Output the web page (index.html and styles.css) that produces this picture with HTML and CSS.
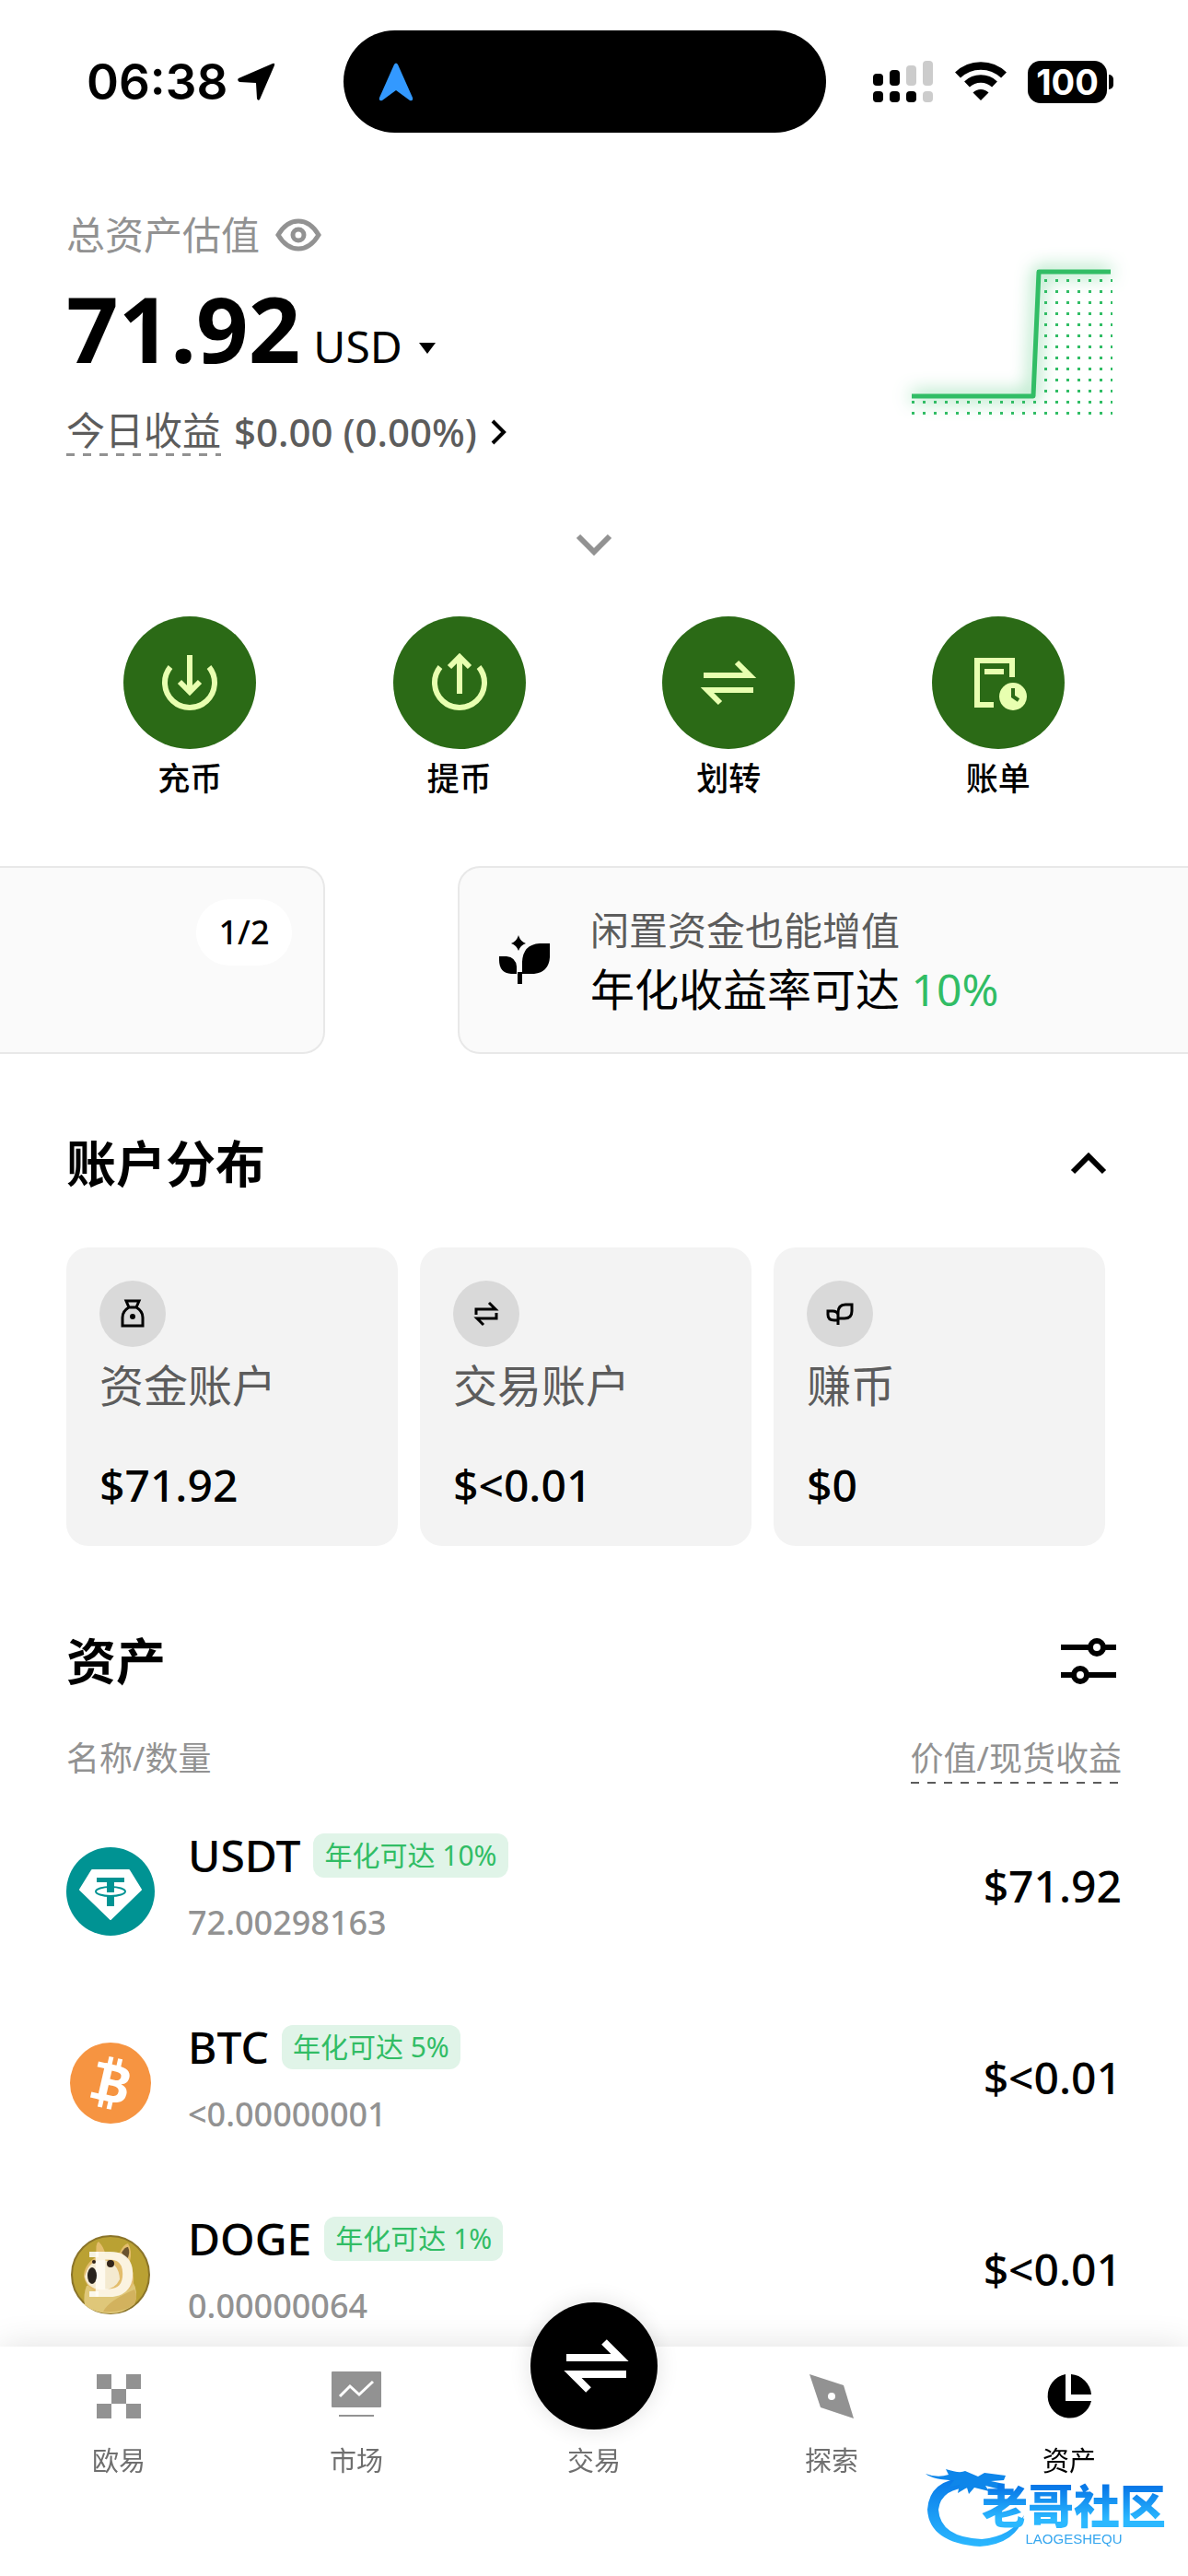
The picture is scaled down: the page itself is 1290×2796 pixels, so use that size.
FILE: index.html
```html
<!DOCTYPE html>
<html lang="zh-CN">
<head>
    <meta charset="UTF-8">
    <meta name="viewport" content="width=device-width, initial-scale=1.0">
    <title>资产</title>
    <link rel="stylesheet" href="styles.css">
</head>
<body>
    <div class="status-bar">
        <div class="status-left">
            <span class="clock">06:38</span>
            <svg width="42" height="42" viewBox="0 0 42 42"><path d="M39 1Q42 0 41 3L25 40Q23 42 22 39L21 22L3 21Q0 19 2 17Z" fill="#000"/></svg>
        </div>
        <div class="island">
            <svg width="38" height="42" viewBox="0 0 38 42"><path d="M17 2Q19-1 21 2L37 38Q38 42 34 41L19 30L4 41Q0 42 1 38Z" fill="#3399ff"/></svg>
        </div>
        <div class="status-right">
            <svg width="66" height="46" viewBox="0 0 66 46">
                <g fill="#000"><rect x="0" y="14" width="11" height="13" rx="4"/><rect x="18" y="10" width="11" height="17" rx="4"/><rect x="0" y="33" width="11" height="12" rx="4"/><rect x="18" y="33" width="11" height="12" rx="4"/><rect x="36" y="33" width="11" height="12" rx="4"/></g>
                <g fill="#ccc"><rect x="36" y="5" width="11" height="22" rx="4"/><rect x="54" y="0" width="11" height="27" rx="4"/><rect x="54" y="33" width="11" height="12" rx="4"/></g>
            </svg>
            <svg width="58" height="43" viewBox="0 0 58 43">
                <path d="M4 14.500A36 36 0 0 1 54 14.500M14 24.500A22 22 0 0 1 44 24.500" fill="none" stroke="#000" stroke-width="8.500"/>
                <path d="M29 42L20.500 33.500A12 12 0 0 1 37.500 33.500Z" fill="#000"/>
            </svg>
            <span class="battery">100</span>
        </div>
    </div>

    <main>
        <section class="summary">
            <div>
                <div class="summary-label">总资产估值
                    <button class="icon-btn" aria-label="隐藏资产">
                        <svg width="50" height="36" viewBox="0 0 50 36" fill="none" stroke="#929292" stroke-width="5"><path d="M3 18Q12 3 25 3T47 18Q38 33 25 33T3 18Z"/><circle cx="25" cy="18" r="6"/></svg>
                    </button>
                </div>
                <div class="balance"><strong>71.92</strong><button class="currency">USD<svg width="18" height="12" viewBox="0 0 18 12"><path d="M0 0H18L9 12Z"/></svg></button></div>
                <a class="profit" href="#profit">
                    <span class="dashed">今日收益</span>
                    <b>$0.00 (0.00%)</b>
                    <svg width="18" height="28" viewBox="0 0 18 28"><path d="M3 2L15 14L3 26" fill="none" stroke="#000" stroke-width="4"/></svg>
                </a>
            </div>
            <svg class="trend" width="220" height="170" viewBox="0 0 220 170">
                <defs><pattern id="dots" width="12" height="12" patternUnits="userSpaceOnUse"><rect width="3" height="3" fill="#31bd65"/></pattern></defs>
                <g transform="translate(0 3)">
                    <path d="M0 144H144V12H218V159H0Z" fill="url(#dots)"/>
                </g>
                <path class="trend-line" d="M0 142H132L138 7H216"/>
            </svg>
        </section>

        <button class="expand icon-btn" aria-label="展开">
            <svg width="40" height="24" viewBox="0 0 40 24"><path d="M3 3L20 20L37 3" fill="none" stroke="#929292" stroke-width="6"/></svg>
        </button>

        <nav class="actions">
            <a href="#deposit">
                <span class="action-icon"><svg viewBox="0 0 144 144"><path d="M51 55A27 27 0 1 0 93 55M72 42V82M61 71L72 82L83 71"/></svg></span>
                充币
            </a>
            <a href="#withdraw">
                <span class="action-icon"><svg viewBox="0 0 144 144"><path d="M51 55A27 27 0 1 0 93 55M72 84V45M61 55L72 44L83 55"/></svg></span>
                提币
            </a>
            <a href="#transfer">
                <span class="action-icon"><svg viewBox="0 0 144 144"><path d="M45 64H95L81 50M99 80H49L63 94"/></svg></span>
                划转
            </a>
            <a href="#bills">
                <span class="action-icon"><svg viewBox="0 0 144 144"><path d="M67 96H49V48H87V66M57 60H78"/><circle cx="88" cy="87" r="15"/><path class="hand" d="M88 78V87L94 91"/></svg></span>
                账单
            </a>
        </nav>
    </main>

    <section class="banners">
        <div class="banner banner-prev"><span class="pager">1/2</span></div>
        <a class="banner banner-next" href="#earn">
            <svg width="58" height="54" viewBox="0 0 58 54"><path d="M22 0Q24 7 30 9Q24 11 22 17Q20 11 14 9Q20 7 22 0ZM1 23H9Q19 24 20 34V42H14Q1 41 1 27ZM56 9V24Q55 40 39 42H26V29Q27 10 45 9Z"/><path d="M21 40H26V53H21Z"/></svg>
            <span class="banner-text"><small>闲置资金也能增值</small>年化收益率可达 <em>10%</em></span>
        </a>
    </section>

    <main>
        <div class="section-head">
            <h2>账户分布</h2>
            <button class="icon-btn collapse" aria-label="收起"><svg width="40" height="26" viewBox="0 0 40 26"><path d="M3 22L20 5L37 22" fill="none" stroke="#000" stroke-width="6"/></svg></button>
        </div>
        <div class="accounts">
            <a class="account" href="#funding">
                <span class="account-icon"><svg viewBox="0 0 72 72"><path d="M29 22H43L40 29H32ZM32 29Q25 33 25 40V49H47V40Q47 33 40 29"/><circle cx="36" cy="39" r="3" fill="#000" stroke="none"/></svg></span>
                <span class="account-name">资金账户</span>
                <b>$71.92</b>
            </a>
            <a class="account" href="#trading">
                <span class="account-icon"><svg viewBox="0 0 72 72"><path d="M25 37V31H46L39 24M47 35V41H26L33 48"/></svg></span>
                <span class="account-name">交易账户</span>
                <b>$&lt;0.01</b>
            </a>
            <a class="account" href="#earning">
                <span class="account-icon"><svg viewBox="0 0 72 72"><path d="M34 41V35Q34 26 42 26H49V33Q49 41 41 41H34V48M34 43H30Q23 43 23 37V33H28Q33 33 34 37"/></svg></span>
                <span class="account-name">赚币</span>
                <b>$0</b>
            </a>
        </div>

        <div class="section-head assets-head">
            <h2>资产</h2>
            <button class="icon-btn filter" aria-label="筛选"><svg width="60" height="54" viewBox="0 0 60 54" fill="none" stroke="#000" stroke-width="6"><path d="M0 12H31M47 12H60M0 42H13M29 42H60"/><circle cx="39" cy="12" r="7"/><circle cx="21" cy="42" r="7"/></svg></button>
        </div>
        <table class="assets">
            <thead>
                <tr><th>名称/数量</th><th><span class="dashed">价值/现货收益</span></th></tr>
            </thead>
            <tbody>
                <tr>
                    <td>
                        <div class="coin">
                            <svg class="coin-logo" viewBox="0 0 96 96">
                                <circle cx="48" cy="48" r="48" fill="#009393"/>
                                <path d="M28 25H68L81 46L48 78L15 46Z" fill="#fff" stroke="#fff" stroke-width="2" stroke-linejoin="round"/>
                                <path d="M33 33H63V38H52V49H44V38H33ZM44 53H52V64H44Z" fill="#009393"/>
                                <ellipse cx="48" cy="48" rx="16" ry="5" fill="none" stroke="#009393" stroke-width="2"/>
                            </svg>
                            <div>
                                <div class="coin-name">USDT <span class="tag">年化可达 10%</span></div>
                                <div class="amount">72.00298163</div>
                            </div>
                        </div>
                    </td>
                    <td>$71.92</td>
                </tr>
                <tr>
                    <td>
                        <div class="coin">
                            <svg class="coin-logo" viewBox="0 0 96 96">
                                <circle cx="48" cy="48" r="44" fill="#f69441"/>
                                <g transform="rotate(13 48 48)" fill="#fff">
                                    <path d="M40 20H45V30H40ZM50 20H55V30H50ZM40 66H45V76H40ZM50 66H55V76H50ZM30 28H40V34H30ZM30 62H40V68H30Z"/>
                                    <text class="btc-mark" x="33" y="68">B</text>
                                </g>
                            </svg>
                            <div>
                                <div class="coin-name">BTC <span class="tag">年化可达 5%</span></div>
                                <div class="amount">&lt;0.00000001</div>
                            </div>
                        </div>
                    </td>
                    <td>$&lt;0.01</td>
                </tr>
                <tr>
                    <td>
                        <div class="coin">
                            <svg class="coin-logo" viewBox="0 0 96 96">
                                <circle cx="48" cy="48" r="42" fill="#baa133" stroke="#8a742a" stroke-width="2"/>
                                <path d="M20 81Q18 70 22 60L72 55Q79 67 74 80Q62 90 48 90Q31 90 20 81Z" fill="#dfc779"/>
                                <path d="M40 88Q46 76 74 64Q78 72 74 80Q60 90 40 88Z" fill="#d2b25e"/>
                                <path d="M33 28Q31 14 35 12Q41 18 42 25L58 24Q62 15 67 14Q72 22 69 34Q74 46 73 58Q66 70 48 70Q24 70 19 50Q19 37 33 28Z" fill="#e3bd6c"/>
                                <path d="M60 24Q64 17 67 18Q70 24 66 31Z" fill="#6b532f"/>
                                <path d="M22 44Q27 32 40 32Q57 34 58 53Q52 66 36 64Q22 62 20 50Z" fill="#f4ead0"/>
                                <path d="M25 23H35V29H25ZM25 66H35V72H25Z" fill="#fff" fill-opacity=".85"/>
                                <text class="doge-mark" x="26" y="72">D</text>
                                <ellipse cx="28" cy="49" rx="5" ry="9" fill="#29231d"/>
                                <circle cx="48" cy="36" r="4" fill="#332519"/><circle cx="30" cy="34" r="2" fill="#332519"/>
                            </svg>
                            <div>
                                <div class="coin-name">DOGE <span class="tag">年化可达 1%</span></div>
                                <div class="amount">0.00000064</div>
                            </div>
                        </div>
                    </td>
                    <td>$&lt;0.01</td>
                </tr>
            </tbody>
        </table>
    </main>

    <nav class="tab-bar">
        <a href="#home">
            <svg width="54" height="54" viewBox="0 0 54 54" fill="#929292"><path d="M3 3h16v16H3zM35 3h16v16H35zM19 19h16v16H19zM3 35h16v16H3zM35 35h16v16H35z"/></svg>
            欧易
        </a>
        <a href="#market">
            <svg width="54" height="54" viewBox="0 0 54 54"><rect width="54" height="39" rx="1" fill="#929292"/><path d="M9 27L20 16L30 25L45 11" fill="none" stroke="#fff" stroke-width="3"/><path d="M8 48H46" stroke="#929292" stroke-width="2"/></svg>
            市场
        </a>
        <a class="trade" href="#trade">
            <span class="trade-btn"><svg viewBox="0 0 138 138"><path d="M39 60H97L80 43M104 78H46L63 95" fill="none" stroke="#fff" stroke-width="8"/></svg></span>
            交易
        </a>
        <a href="#explore">
            <svg width="54" height="54" viewBox="0 0 54 54"><path d="M3 3L40 15L51 51L15 39Z" fill="#929292"/><circle cx="27" cy="27" r="4" fill="#fff"/></svg>
            探索
        </a>
        <a class="active" href="#assets">
            <svg width="54" height="54" viewBox="0 0 54 54"><path d="M23 3A24 24 0 1 0 51 32H23ZM29 3A24 24 0 0 1 51 25H29Z"/></svg>
            资产
        </a>
    </nav>

    <div class="watermark">
        <svg width="112" height="94" viewBox="0 0 112 94">
            <defs><linearGradient id="blue" x1="0" y1="0" x2="0" y2="1"><stop offset="0" stop-color="#0878e8"/><stop offset="1" stop-color="#2bb8ff"/></linearGradient></defs>
            <path d="M46 17Q5 19 3 52Q5 88 60 92Q100 89 108 58Q94 81 62 84Q17 82 15 52Q18 27 54 28Z" fill="url(#blue)"/>
            <path d="M1 13Q14 18 26 14L23 8Q38 13 44 10L58 16L65 12L88 15L86 20L72 21L86 24L82 30L66 26L70 32L54 28L48 35L46 28L36 34L38 25L26 28L32 20Q10 20 1 13Z" fill="#0e86ea"/>
        </svg>
        <div>
            <strong>老哥社区</strong>
            <span>LAOGESHEQU</span>
        </div>
    </div>
</body>
</html>
```

FILE: styles.css
```css
* {
    box-sizing: border-box;
}
body {
    margin: 0;
    padding-bottom: 229px;
    background: #fff;
    color: #000;
    font-family: "Noto Sans", "Noto Sans CJK SC", sans-serif;
    overflow-x: hidden;
}
main {
    padding: 0 72px;
}
a {
    color: inherit;
    text-decoration: none;
}
button {
    font: inherit;
    color: inherit;
    background: none;
    border: none;
    padding: 0;
    cursor: pointer;
}
svg {
    display: block;
    flex: none;
}
h2 {
    margin: 0;
    font-size: 54px;
    line-height: 72px;
    font-weight: 600;
}
.icon-btn {
    display: block;
}

/* status bar */
.status-bar {
    display: grid;
    grid-template-columns: 37fr 52fr 39fr;
    align-items: center;
    padding-top: 33px;
    font-family: Inter, sans-serif;
}
.status-left {
    display: flex;
    align-items: center;
    gap: 10px;
    padding-left: 94px;
}
.clock {
    font-size: 53px;
    line-height: 60px;
    font-weight: 600;
}
.island {
    display: flex;
    align-items: center;
    height: 111px;
    padding-left: 38px;
    border-radius: 56px;
    background: #000;
}
.status-right {
    display: flex;
    align-items: center;
    justify-content: flex-end;
    gap: 22px;
    padding-right: 88px;
}
.battery {
    position: relative;
    width: 86px;
    border-radius: 14px;
    background: #000;
    color: #fff;
    font-size: 38px;
    line-height: 46px;
    font-weight: 700;
    text-align: center;
}
.battery::after {
    content: "";
    position: absolute;
    right: -7px;
    top: 15px;
    width: 5px;
    height: 16px;
    border-radius: 0 5px 5px 0;
    background: #000;
}

/* total value */
.summary {
    display: flex;
    justify-content: space-between;
    padding-top: 81px;
}
.summary-label {
    display: flex;
    align-items: center;
    gap: 17px;
    font-size: 42px;
    line-height: 60px;
    color: #929292;
}
.balance {
    display: flex;
    align-items: baseline;
    gap: 14px;
    height: 120px;
    margin-top: 11px;
    font-size: 48px;
    white-space: nowrap;
}
.balance strong {
    font-size: 99px;
    line-height: 120px;
    font-weight: 700;
}
.currency svg {
    display: inline-block;
    margin-left: 18px;
    vertical-align: 10px;
}
.profit {
    display: flex;
    align-items: center;
    gap: 14px;
    margin-top: 26px;
    font-size: 42px;
    line-height: 50px;
    color: #5c5c5c;
}
.profit b {
    font-weight: 500;
}
.dashed {
    padding-bottom: 3px;
    background: repeating-linear-gradient(90deg, #929292 0 9px, transparent 9px 18px) bottom / 100% 3px no-repeat;
}
.trend {
    margin: 63px 8px 0 0;
    overflow: visible;
}
.trend-line {
    fill: none;
    stroke: #31bd65;
    stroke-width: 5;
    stroke-linejoin: round;
    filter: drop-shadow(0 0 10px #31bd65);
}
.expand {
    margin: 84px auto 0;
}

/* round actions */
.actions {
    display: grid;
    grid-template-columns: repeat(4, 1fr);
    margin: 66px -12px 0;
}
.actions a {
    display: flex;
    flex-direction: column;
    align-items: center;
    gap: 8px;
    font-size: 35px;
    line-height: 48px;
    font-weight: 500;
}
.action-icon {
    width: 144px;
    height: 144px;
    border-radius: 50%;
    background: #2b6a16;
}
.action-icon svg {
    fill: none;
    stroke: #e8ffb0;
    stroke-width: 6;
}
.action-icon circle {
    fill: #e8ffb0;
    stroke: none;
}
.action-icon .hand {
    stroke: #2b6a16;
    stroke-width: 4;
}

/* banners */
.banners {
    display: flex;
    gap: 144px;
    margin-top: 71px;
}
.banner {
    display: flex;
    height: 204px;
    border: 2px solid #e8e8e8;
    background: #fafafa;
}
.banner-prev {
    flex: 0 0 353px;
    justify-content: flex-end;
    align-items: flex-start;
    padding: 34px 34px 0 0;
    border-left: none;
    border-radius: 0 24px 24px 0;
}
.pager {
    width: 104px;
    border-radius: 36px;
    background: #fff;
    font-size: 36px;
    line-height: 72px;
    font-weight: 500;
    text-align: center;
}
.banner-next {
    flex: 1;
    align-items: center;
    gap: 42px;
    padding-left: 42px;
    border-right: none;
    border-radius: 24px 0 0 24px;
}
.banner-text {
    font-size: 48px;
    line-height: 64px;
}
.banner-text small {
    display: block;
    font-size: 42px;
    color: #5c5c5c;
}
.banner-text em {
    font-style: normal;
    color: #31bd65;
}

/* accounts */
.section-head {
    display: flex;
    align-items: center;
    justify-content: space-between;
    margin-top: 83px;
}
.collapse {
    margin-right: 16px;
}
.accounts {
    display: grid;
    grid-template-columns: repeat(3, 1fr);
    gap: 24px;
    margin: 55px 18px 0 0;
}
.account {
    display: flex;
    flex-direction: column;
    padding: 36px;
    border-radius: 24px;
    background: #f3f3f3;
    font-size: 48px;
    line-height: 60px;
}
.account-icon {
    width: 72px;
    height: 72px;
    border-radius: 50%;
    background: #d9d9d9;
}
.account-icon svg {
    fill: none;
    stroke: #000;
    stroke-width: 3;
}
.account-name {
    margin: 12px 0 48px;
    color: #5c5c5c;
}
.account b {
    font-weight: 500;
}

/* assets */
.assets-head {
    margin-top: 89px;
}
.filter {
    margin-right: 6px;
}
.assets {
    width: 100%;
    margin-top: 49px;
    border-collapse: collapse;
}
.assets th {
    height: 55px;
    padding: 0;
    font-size: 36px;
    line-height: 42px;
    font-weight: 400;
    text-align: left;
    vertical-align: top;
    color: #929292;
}
.assets th .dashed {
    display: inline-block;
    padding-bottom: 6px;
    background: repeating-linear-gradient(90deg, #5c5c5c 0 9px, transparent 9px 18px) bottom / 100% 2px no-repeat;
}
.assets td {
    height: 208px;
    padding: 0;
    font-size: 48px;
    line-height: 60px;
    font-weight: 500;
    vertical-align: middle;
}
.assets th:last-child,
.assets td:last-child {
    text-align: right;
}
.coin {
    display: flex;
    align-items: center;
    gap: 36px;
}
.coin-logo {
    width: 96px;
    height: 96px;
    margin-top: 12px;
}
.coin-name {
    display: flex;
    align-items: center;
    gap: 14px;
}
.tag {
    padding: 0 12px;
    border-radius: 12px;
    background: #e0f4e8;
    color: #31bd65;
    font-size: 30px;
    line-height: 48px;
    font-weight: 400;
}
.amount {
    margin-top: 19px;
    font-size: 36px;
    line-height: 48px;
    color: #929292;
}
.btc-mark {
    font-size: 56px;
    font-weight: 700;
}
.doge-mark {
    font-size: 68px;
    font-weight: 700;
    fill: #fffdf5;
    fill-opacity: .85;
}

/* bottom tabs */
.tab-bar {
    position: fixed;
    left: 0;
    right: 0;
    bottom: 0;
    display: grid;
    grid-template-columns: repeat(5, 1fr);
    height: 249px;
    padding-top: 27px;
    background: #fff;
    box-shadow: 0 0 36px rgba(0, 0, 0, .12);
}
.tab-bar a {
    display: flex;
    flex-direction: column;
    align-items: center;
    gap: 22px;
    font-size: 29px;
    line-height: 42px;
    color: #6f6f6f;
}
.tab-bar .active {
    color: #000;
}
.trade-btn {
    width: 138px;
    height: 138px;
    margin: -75px 0 -9px;
    border-radius: 50%;
    background: #000;
    box-shadow: 0 0 24px rgba(0, 0, 0, .12);
}

.watermark {
    position: fixed;
    right: 24px;
    bottom: 30px;
    display: flex;
    align-items: flex-end;
}
.watermark div {
    margin-left: -50px;
    text-align: center;
}
.watermark strong {
    display: block;
    background: linear-gradient(#0878e8 20%, #2bb8ff 80%);
    -webkit-background-clip: text;
    background-clip: text;
    color: transparent;
    font-family: "Noto Sans CJK SC", sans-serif;
    font-size: 50px;
    line-height: 58px;
    font-weight: 900;
}
.watermark span {
    display: block;
    font-family: "Liberation Sans", sans-serif;
    font-size: 15px;
    line-height: 20px;
    color: #35a6ef;
}
```
